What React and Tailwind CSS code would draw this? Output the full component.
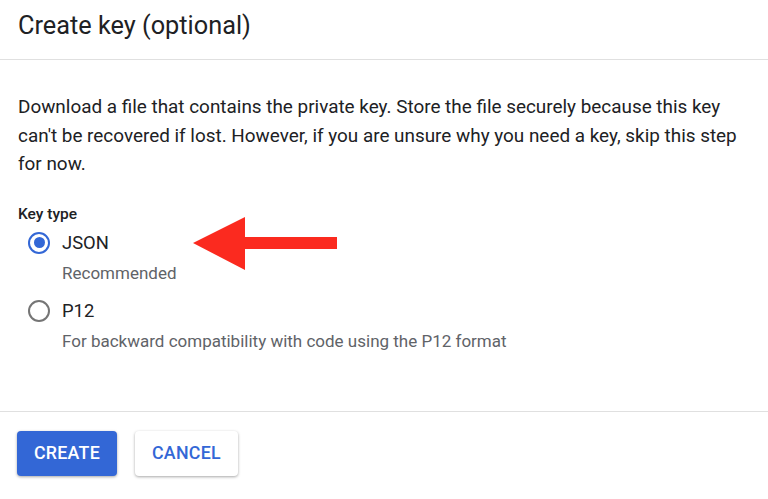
export default function App() {
  return (
    <div className="w-[768px] h-[499px] bg-white overflow-hidden relative" style={{ fontFamily: 'Roboto, "Liberation Sans", sans-serif' }}>
      <div className="h-[60px] border-b border-[#e0e0e0] pl-[18px] pt-[8px]">
        <h1 className="text-[25.3px] leading-[36px] text-[#202124]">Create key (optional)</h1>
      </div>
      <div className="pl-[18px] pt-[33px]">
        <p className="text-[18.9px] leading-[28.5px] text-[#202124] w-[722px]">
          Download a file that contains the private key. Store the file securely because this key can't be recovered if lost. However, if you are unsure why you need a key, skip this step for now.
        </p>
        <div className="mt-[25px] text-[15.5px] font-medium text-[#202124] leading-[20px]">Key type</div>
        <div className="flex flex-col">
          <div className="flex items-center h-[38px]">
            <div className="ml-[10px] w-[22px] h-[22px] rounded-full border-[2.5px] border-[#3367d6] flex items-center justify-center">
              <div className="w-[11px] h-[11px] rounded-full bg-[#3367d6]" />
            </div>
            <span className="ml-[12px] text-[18.4px] text-[#202124]">JSON</span>
          </div>
          <div className="pl-[44px] text-[17px] text-[#5f6368] leading-[22px]">Recommended</div>
          <div className="flex items-center h-[38px] mt-[8px]">
            <div className="ml-[10px] w-[22px] h-[22px] rounded-full border-[2.5px] border-[#757575]" />
            <span className="ml-[12px] text-[18.4px] text-[#202124]">P12</span>
          </div>
          <div className="pl-[44px] text-[17px] text-[#5f6368] leading-[22px]">For backward compatibility with code using the P12 format</div>
        </div>
      </div>
      <div className="absolute left-0 right-0 top-[411px] border-t border-[#e0e0e0]" />
      <div className="absolute left-[17px] top-[431px] flex gap-[18px]">
        <button className="w-[100px] h-[45px] rounded-[4px] bg-[#3367d6] text-white text-[17.8px] font-medium tracking-[0.3px] shadow-[0_1px_3px_rgba(0,0,0,0.35)]">CREATE</button>
        <button className="w-[103px] h-[45px] rounded-[4px] bg-white text-[#3367d6] text-[17.8px] font-medium tracking-[0.3px] shadow-[0_1px_3px_rgba(0,0,0,0.35)]">CANCEL</button>
      </div>
      <svg className="absolute left-[190px] top-[214px]" width="150" height="60" viewBox="0 0 150 60">
        <polygon points="3,29 55,3 55,23 147,23 147,35 55,35 55,56" fill="#fb2a1f" />
      </svg>
    </div>
  );
}
